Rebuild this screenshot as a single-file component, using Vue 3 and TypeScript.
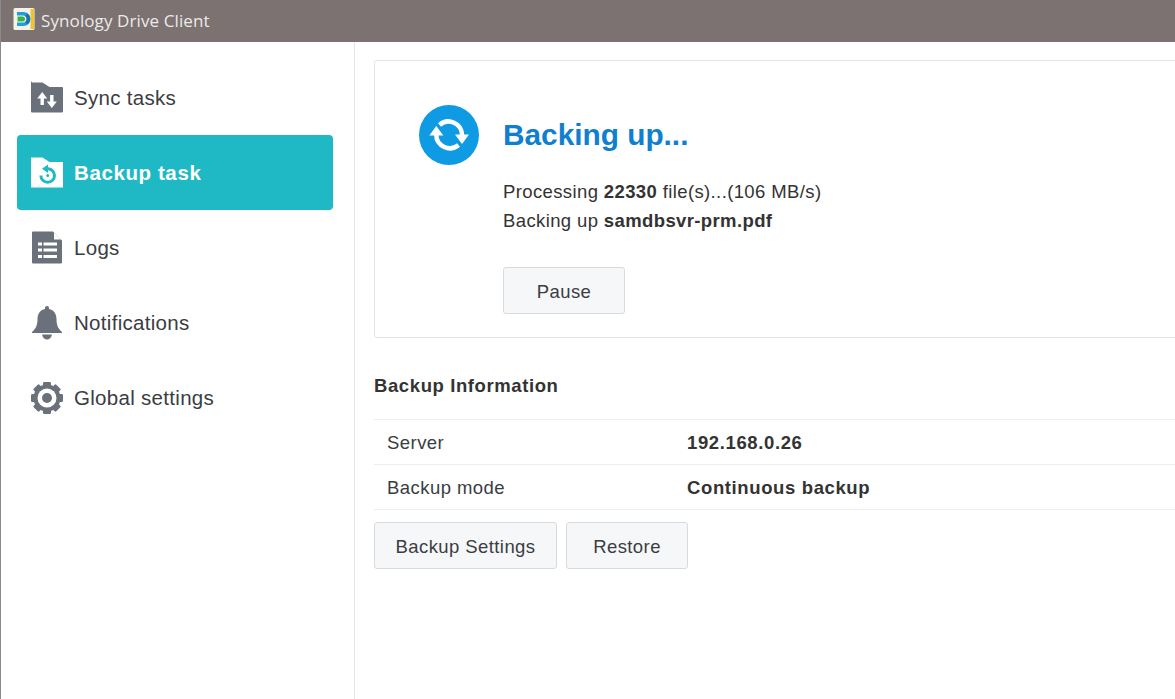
<template>
  <div class="window">
    <header class="titlebar">
      <svg class="app-logo" viewBox="0 0 24 24" width="24" height="24">
        <rect x="1.500" y="1" width="21" height="22" rx="1.500" fill="#f6f3e6" />
        <rect x="18.500" y="2" width="3.500" height="20" fill="#f2c230" />
        <path d="M5 5h6.500a7 7 0 0 1 0 14H5v-3.500h6a3.500 3.500 0 0 0 0-7H5z" fill="#1f9fd8" />
        <path d="M5.500 9.500h5a2.500 2.500 0 0 1 0 5h-5z" fill="#35b44a" />
        <path d="M15.500 6.500a7 7 0 0 1 0 11l-2.500-2.500a3.500 3.500 0 0 0 0-6z" fill="#1c6fb8" />
      </svg>
      <span class="app-title">Synology Drive Client</span>
    </header>

    <div class="body">
      <nav class="sidebar">
        <a v-for="item in navItems" :key="item.label" class="nav-item" :class="{ active: item.active }">
          <svg class="nav-icon" viewBox="0 0 34 34" width="34" height="34">
            <template v-if="item.icon === 'sync'">
              <path d="M2 1.500h10.500l7 4.500H32a1 1 0 0 1 1 1v23.500a1 1 0 0 1-1 1H2a1 1 0 0 1-1-1v-29a1 1 0 0 1 1-1z" fill="#6b717b" />
              <path d="M12.200 11l5 6.500h-3.300V24h-3.400v-6.500H7.200zM21.800 27l-5-6.500h3.300V14h3.400v6.500h3.300z" fill="#fff" />
            </template>
            <template v-else-if="item.icon === 'backup'">
              <path d="M1 1.500h11.500l7 4.500H33v25.500H1z" fill="#fff" />
              <path d="M17.700 12.700a6.800 6.800 0 1 1-6.800 6.800" fill="none" stroke="#1fb9c6" stroke-width="3" />
              <path d="M18 8.500v8.500l-6-4.300z" fill="#1fb9c6" />
              <circle cx="17.700" cy="19.500" r="1.500" fill="#1fb9c6" />
            </template>
            <template v-else-if="item.icon === 'logs'">
              <path d="M3 .500h20l9 9v22a1 1 0 0 1-1 1H3a1 1 0 0 1-1-1v-30a1 1 0 0 1 1-1z" fill="#6b717b" />
              <path d="M24 1.500l7 7h-7z" fill="#fff" />
              <path d="M8 11.500h4v3H8zM13.500 11.500H27v3H13.500zM8 17.500h4v3H8zM13.500 17.500H27v3H13.500zM8 24h4v3H8zM13.500 24H27v3H13.500z" fill="#fff" />
            </template>
            <template v-else-if="item.icon === 'bell'">
              <path d="M17 0c1.200 0 2 .8 2 2v1c5 1 7.500 5 7.500 10 0 6 1.500 9.500 5.500 13v1H2v-1c4-3.500 5.500-7 5.500-13 0-5 2.500-9 7.500-10V2c0-1.200.8-2 2-2z" fill="#6b717b" />
              <path d="M12 28.500h10c-.5 3-2.800 5-5 5s-4.500-2-5-5z" fill="#6b717b" />
            </template>
            <template v-else>
              <circle cx="17" cy="17" r="13.500" fill="#6b717b" />
              <rect
                v-for="angle in gearTeeth"
                :key="angle"
                x="13"
                y="1"
                width="8"
                height="6"
                rx="1.200"
                fill="#6b717b"
                :transform="`rotate(${angle} 17 17)`"
              />
              <circle cx="17" cy="17" r="9.500" fill="#fff" />
              <circle cx="17" cy="17" r="5" fill="#6b717b" />
            </template>
          </svg>
          <span class="nav-label">{{ item.label }}</span>
        </a>
      </nav>

      <main class="content">
        <section class="status-card">
          <div class="status-head">
            <svg class="status-icon" viewBox="0 0 60 60" width="60" height="60">
              <circle cx="30" cy="30" r="30" fill="#0f9be3" />
              <path d="M20.500 20A13.500 13.500 0 0 1 43 30" fill="none" stroke="#fff" stroke-width="4.500" />
              <path d="M17.300 30A13.500 13.500 0 0 0 39.500 40" fill="none" stroke="#fff" stroke-width="4.500" />
              <path d="M36 29.500h14l-7 9.500zM10.300 30.500h14l-7-9.500z" fill="#fff" />
            </svg>
            <h1 class="status-title">Backing up...</h1>
          </div>
          <div class="status-lines">
            <p>Processing <b>22330</b> file(s)...(106 MB/s)</p>
            <p>Backing up <b>samdbsvr-prm.pdf</b></p>
          </div>
          <button class="btn pause-btn">Pause</button>
        </section>

        <h2 class="info-title">Backup Information</h2>
        <div class="info-table">
          <div v-for="row in infoRows" :key="row.label" class="info-row">
            <span class="info-label">{{ row.label }}</span>
            <span class="info-value">{{ row.value }}</span>
          </div>
        </div>

        <div class="actions">
          <button class="btn settings-btn">Backup Settings</button>
          <button class="btn restore-btn">Restore</button>
        </div>
      </main>
    </div>
  </div>
</template>

<script setup lang="ts">
interface NavItem {
  label: string
  icon: string
  active?: boolean
}

const navItems: NavItem[] = [
  { label: 'Sync tasks', icon: 'sync' },
  { label: 'Backup task', icon: 'backup', active: true },
  { label: 'Logs', icon: 'logs' },
  { label: 'Notifications', icon: 'bell' },
  { label: 'Global settings', icon: 'gear' },
]

const gearTeeth = [0, 45, 90, 135, 180, 225, 270, 315]

const infoRows = [
  { label: 'Server', value: '192.168.0.26' },
  { label: 'Backup mode', value: 'Continuous backup' },
]
</script>

<style>
html,
body {
  margin: 0;
  overflow: hidden;
  background: #fff;
}
</style>

<style scoped>
.window {
  width: 1175px;
  height: 699px;
  display: flex;
  flex-direction: column;
  overflow: hidden;
  box-sizing: border-box;
  border-left: 1px solid #8a8a8a;
  font-family: 'Liberation Sans', Arial, sans-serif;
  color: #333;
}
.titlebar {
  flex: none;
  height: 42px;
  margin-left: -1px;
  display: flex;
  align-items: center;
  gap: 5px;
  padding-left: 12px;
  background: #7b7271;
}
.app-logo {
  flex: none;
  margin-top: -4px;
}
.app-title {
  margin-top: -2px;
  font-family: 'Open Sans', sans-serif;
  font-size: 17px;
  letter-spacing: 0.1px;
  color: #eceaea;
}
.body {
  flex: 1;
  display: flex;
  min-height: 0;
}
.sidebar {
  flex: none;
  width: 354px;
  box-sizing: border-box;
  border-right: 1px solid #e3e4e6;
  padding: 18px 21px 0 16px;
}
.nav-item {
  display: flex;
  align-items: center;
  height: 75px;
  padding-left: 13px;
  gap: 10px;
  border-radius: 4px;
  font-size: 20.5px;
  letter-spacing: 0.3px;
  color: #3a3d42;
}
.nav-item.active {
  background: #1fb9c6;
  color: #fff;
  font-weight: bold;
  letter-spacing: 0.6px;
}
.nav-icon {
  flex: none;
}
.content {
  flex: 1;
  min-width: 0;
  padding: 18px 0 0 19px;
  overflow: hidden;
}
.status-card {
  width: calc(100% + 20px);
  height: 278px;
  box-sizing: border-box;
  border: 1px solid #e3e4e6;
  border-radius: 3px;
  padding: 44px 0 0 44px;
}
.status-head {
  display: flex;
  align-items: center;
  gap: 24px;
}
.status-title {
  margin: 0;
  font-size: 29.8px;
  font-weight: bold;
  color: #0f7fd0;
}
.status-lines {
  margin: 12px 0 0 84px;
  font-size: 18.5px;
  letter-spacing: 0.38px;
  line-height: 29px;
}
.status-lines p {
  margin: 0;
}
.btn {
  height: 47px;
  padding: 2px 0 0;
  box-sizing: border-box;
  border: 1px solid #d8dbde;
  border-radius: 3px;
  background: #f6f7f8;
  font-family: inherit;
  font-size: 18.5px;
  letter-spacing: 0.42px;
  color: #3a3d42;
}
.pause-btn {
  display: block;
  width: 122px;
  margin: 32px 0 0 84px;
}
.info-title {
  margin: 37px 0 0;
  height: 22px;
  font-size: 18.5px;
  line-height: 22px;
  letter-spacing: 0.6px;
  font-weight: bold;
  color: #333;
}
.info-table {
  margin-top: 22px;
  border-top: 1px solid #eceef0;
  width: calc(100% + 20px);
}
.info-row {
  display: flex;
  align-items: center;
  height: 42px;
  padding: 2px 0 0 13px;
  border-bottom: 1px solid #eceef0;
  font-size: 18.5px;
  letter-spacing: 0.45px;
}
.info-label {
  width: 300px;
  color: #3a3d42;
}
.info-value {
  font-weight: bold;
  letter-spacing: 0.62px;
}
.actions {
  display: flex;
  gap: 9px;
  margin-top: 12px;
}
.settings-btn {
  width: 183px;
}
.restore-btn {
  width: 122px;
}
</style>
